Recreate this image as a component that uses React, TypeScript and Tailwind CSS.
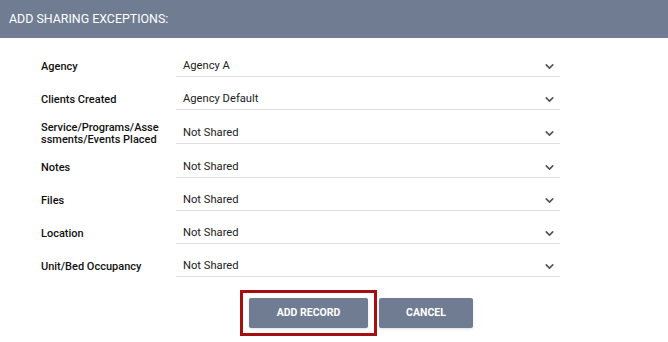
import { ChevronDown } from 'lucide-react'

const rows = [
  { label: 'Agency', value: 'Agency A', h: 'h-[33px]' },
  { label: 'Clients Created', value: 'Agency Default', h: 'h-[33px]' },
  { label: 'Service/Programs/Assessments/Events Placed', value: 'Not Shared', h: 'h-[35px]' },
  { label: 'Notes', value: 'Not Shared', h: 'h-[33px]' },
  { label: 'Files', value: 'Not Shared', h: 'h-[33px]' },
  { label: 'Location', value: 'Not Shared', h: 'h-[33px]' },
  { label: 'Unit/Bed Occupancy', value: 'Not Shared', h: 'h-[33px]' },
]

export default function App() {
  return (
    <div className="w-[668px] h-[342px] bg-white overflow-hidden font-['Roboto','Liberation_Sans',sans-serif]">
      {/* Header */}
      <div className="h-[38px] bg-[#6f7c92] flex items-center pl-[9px]">
        <h2 className="text-white text-[12.4px]">ADD SHARING EXCEPTIONS:</h2>
      </div>

      {/* Rows */}
      <div className="ml-[41px] w-[519px] pt-[12px]">
        {rows.map((row) => (
          <div key={row.label} className={`flex items-center ${row.h}`}>
            <div className="w-[119px] mr-[16px] text-[11px] leading-[12px] font-medium text-[#111] break-all">
              {row.label}
            </div>
            <div className="flex-1 h-[21px] flex items-center justify-between border-b border-[#e0e0e0] pl-[7px] pr-[4px]">
              <span className="text-[11.2px] text-[#222]">{row.value}</span>
              <ChevronDown className="w-[13px] h-[13px] text-[#555]" strokeWidth={3} />
            </div>
          </div>
        ))}
      </div>

      {/* Buttons */}
      <div className="flex items-start pl-[240px] mt-[7px]">
        <div className="border-[3px] border-[#a50f0f] px-[6px] py-[5px]">
          <button className="w-[119px] h-[30px] bg-[#6f7c92] text-white text-[10.5px] font-bold rounded-[2px] shadow-sm">
            ADD RECORD
          </button>
        </div>
        <button className="ml-[2px] mt-[8px] w-[94px] h-[30px] bg-[#6f7c92] text-white text-[10.5px] font-bold rounded-[2px] shadow-sm">
          CANCEL
        </button>
      </div>
    </div>
  )
}
